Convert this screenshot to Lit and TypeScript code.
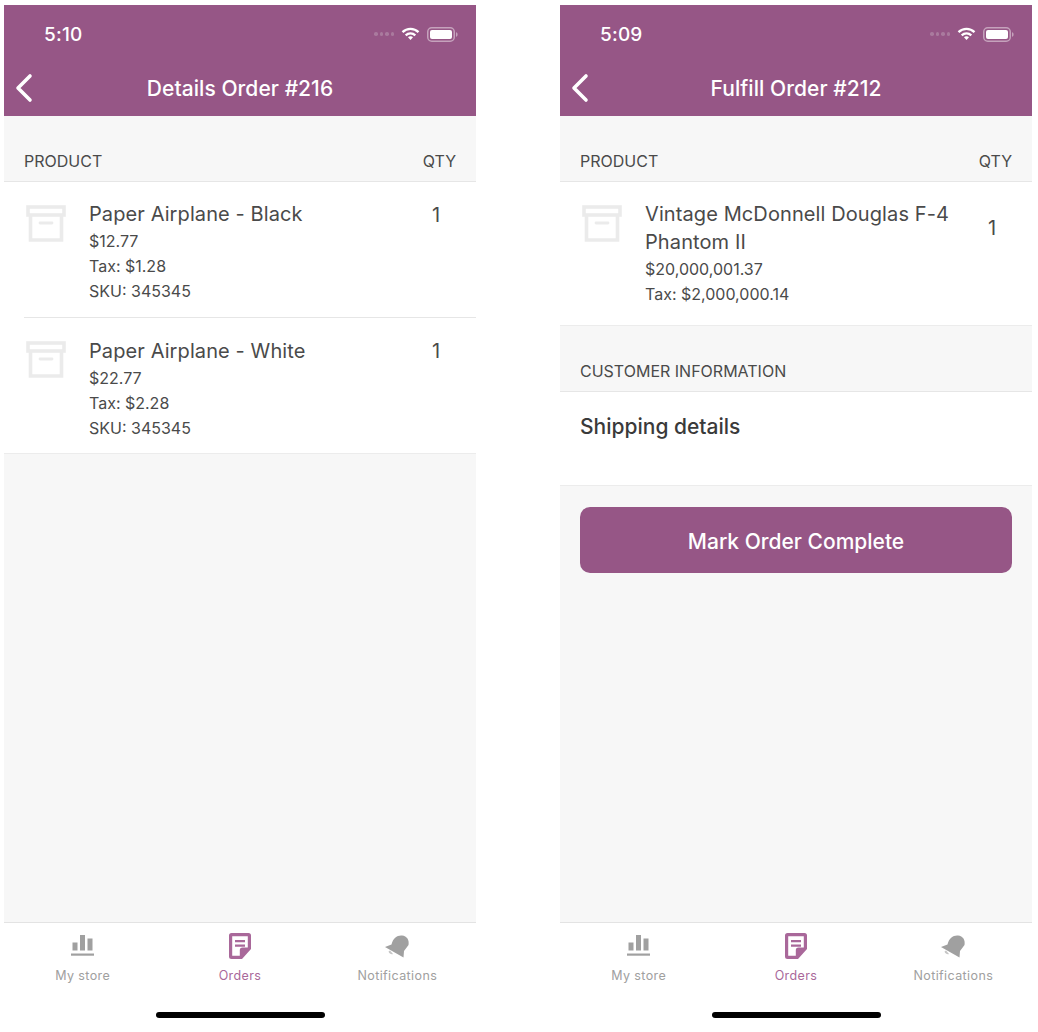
import { LitElement, html, css, svg } from "lit";
import { customElement, property } from "lit/decorators.js";

const archive = html`<svg class="box" width="40" height="40" viewBox="0 0 40 40" fill="none" stroke="#ebebeb" stroke-width="3.6"><rect x="2" y="3" width="36" height="8"/><path d="M4.5 11v25h31V11"/><path d="M14 19h12" stroke-width="2.8" stroke-linecap="round"/></svg>`;

const chart = svg`<path fill="currentColor" d="M1.5 10h5v8h-5zM9 2.5h5V18H9zM16.5 6h5v12h-5z"/><path fill="currentColor" d="M0 21h23v2.2H0z"/>`;

@customElement("order-phone")
class OrderPhone extends LitElement {
  @property() time = "";
  @property() heading = "";
  static styles = css`
    :host { display: block; width: 472px; height: 1022px; background: #f7f7f7; }
    .phone { display: flex; flex-direction: column; height: 100%; }
    .top { background: #965686; color: #fff; height: 111px; flex: none; display: flex; flex-direction: column; }
    .status { height: 53px; display: flex; align-items: center; justify-content: space-between; padding: 5px 18px 0 40px; box-sizing: border-box; }
    .time { font-size: 19px; font-weight: 500; letter-spacing: .2px; width: 40px; }
    .sys { display: flex; align-items: center; gap: 7px; }
    .dots { display: flex; gap: 2px; }
    .dots i { width: 3.5px; height: 3.5px; border-radius: 50%; background: #aa7a9e; }
    .nav { flex: 1; position: relative; display: flex; align-items: center; justify-content: center; padding-top: 3px; }
    .title { font-size: 21px; font-weight: 500; letter-spacing: .06px; }
    .back { position: absolute; left: 10px; top: 15px; }
    .content { flex: 1; display: flex; flex-direction: column; min-height: 0; }
    .tabs { flex: none; height: 105px; background: #fff; border-top: 1px solid #e3e3e3; box-sizing: border-box; display: grid; grid-template-columns: repeat(3, 1fr); position: relative; }
    .tab { display: flex; flex-direction: column; align-items: center; padding-top: 9px; color: #a0a0a0; font-size: 12.5px; line-height: 15px; font-weight: 400; gap: 8px; letter-spacing: .4px; }
    .tab.on { color: #a9689a; }
    .tab svg { display: block; height: 28px; }
    .home { position: absolute; left: 152px; bottom: 9px; width: 169px; height: 6px; border-radius: 3px; background: #000; }
  `;
  render() {
    return html`<div class="phone">
      <div class="top">
        <div class="status">
          <span class="time">${this.time}</span>
          <span class="sys">
            <span class="dots"><i></i><i></i><i></i><i></i></span>
            <svg width="19" height="14" viewBox="0 0 19 14" fill="none" stroke="#fff" stroke-width="2.3"><path d="M1.5 5.2a11.5 11.5 0 0 1 16 0"/><path d="M4.7 8.300a7 7 0 0 1 9.600 0"/><path fill="#fff" stroke="none" d="M9.500 9.200a3 3 0 0 1 2.500 1.100L9.500 13 7 10.300a3 3 0 0 1 2.500-1.100z"/></svg>
            <svg width="31" height="15" viewBox="0 0 31 15"><rect x=".75" y=".75" width="26.500" height="13.500" rx="4" fill="none" stroke="#c5a2bc" stroke-width="1.500"/><rect x="3" y="3" width="22" height="9" rx="2" fill="#fff"/><path d="M29 5.300c1 .3 1.600 1.100 1.600 2.200s-.6 1.900-1.600 2.200z" fill="#c5a2bc"/></svg>
          </span>
        </div>
        <div class="nav">
          <svg class="back" width="20" height="30" viewBox="0 0 20 30" fill="none" stroke="#fff" stroke-width="3.600" stroke-linecap="round" stroke-linejoin="round"><path d="M16 3 4 15l12 12"/></svg>
          <span class="title">${this.heading}</span>
        </div>
      </div>
      <div class="content"><slot></slot></div>
      <div class="tabs">
        <div class="tab"><svg width="23" height="28" viewBox="0 -.5 23 28">${chart}</svg>My store</div>
        <div class="tab on"><svg width="24" height="28" viewBox="0 0 24 28"><path d="M3.500 1h17A2.500 2.500 0 0 1 23 3.500V17l-9 10H3.500A2.500 2.500 0 0 1 1 24.500V3.500A2.500 2.500 0 0 1 3.500 1z" fill="#a9689a"/><path d="M4.200 4.200h15.600v11.300h-5.300a2.700 2.700 0 0 0-2.700 2.700v5.600H4.200z" fill="#fff"/><path d="M7 8h10v2.200H7zM7 12.500h10v2.200H7z" fill="#a9689a"/></svg>Orders</div>
        <div class="tab"><svg width="26" height="28" viewBox="0 -3 26 28"><path fill="currentColor" d="M1 12 7.500 9.500C9 3 13.500 0 18 .5 23 1 25.500 5 24.500 10L20 16l-.5 6.500z"/><path fill="currentColor" d="M4.500 16.500a3.500 3.500 0 0 0 4.500 2.500L6 15.500z" opacity=".6"/></svg>Notifications</div>
        <div class="home"></div>
      </div>
    </div>`;
  }
}

@customElement("app-root")
export class AppRoot extends LitElement {
  static styles = css`
    :host { display: block; width: 1038px; height: 1032px; background: #fff; font-family: Inter, "Liberation Sans", sans-serif; }
    .wrap { display: flex; gap: 84px; padding: 5px 0 0 4px; }
    .sec { display: flex; justify-content: space-between; align-items: flex-end; padding: 0 20px 11px 20px; font-size: 16px; color: #4a4a4a; height: 65px; box-sizing: border-box; line-height: 18px; }
    .list { background: #fff; border-top: 1px solid #e6e6e6; border-bottom: 1px solid #ececec; }
    .row { display: flex; padding: 18px 20px 0 22px; height: 135px; box-sizing: border-box; }
    .row.ruled { height: 136px; }
    .row.plain { padding-top: 19px; }
    .box { flex: none; margin-right: 23px; margin-top: 4px; }
    .row.plain .box { margin-top: 3px; }
    .info { flex: 1; }
    .name { font-size: 20px; letter-spacing: .1px; line-height: 28px; color: #4a4a4a; margin-bottom: 1px; }
    .line { font-size: 16px; line-height: 25px; color: #4a4a4a; }
    .qty { font-size: 20px; color: #4a4a4a; width: 24px; margin: 1px 8px 0 0; text-align: center; line-height: 28px; }
    .row.plain .qty { margin-top: 0; }
    .ruled { position: relative; }
    .ruled::after { content: ""; position: absolute; left: 20px; right: 0; bottom: 0; height: 1px; background: #e6e6e6; }
    .row.big { height: 143px; }
    .row.big .qty { margin-top: 14px; }
    .ship { height: 93px; padding: 21px 20px 0; box-sizing: border-box; font-size: 21px; font-weight: 500; color: #3a3a3a; line-height: 28px; }
    .btn { margin: 21px 20px 0; height: 66px; padding-top: 2px; box-sizing: border-box; background: #965686; color: #fff; border-radius: 10px; font-size: 21px; font-weight: 500; display: flex; align-items: center; justify-content: center; }
  `;
  row(name: string, price: string, tax: string, sku: string, ruled: boolean) {
    return html`<div class="row ${ruled ? "ruled" : "plain"}">${archive}
      <div class="info"><div class="name">${name}</div><div class="line">${price}</div><div class="line">${tax}</div><div class="line">${sku}</div></div>
      <div class="qty">1</div></div>`;
  }
  render() {
    return html`<div class="wrap">
      <order-phone time="5:10" heading="Details Order #216">
        <div class="sec"><span>PRODUCT</span><span>QTY</span></div>
        <div class="list">
          ${this.row("Paper Airplane - Black", "$12.77", "Tax: $1.28", "SKU: 345345", true)}
          ${this.row("Paper Airplane - White", "$22.77", "Tax: $2.28", "SKU: 345345", false)}
        </div>
      </order-phone>
      <order-phone time="5:09" heading="Fulfill Order #212">
        <div class="sec"><span>PRODUCT</span><span>QTY</span></div>
        <div class="list">
          <div class="row big">${archive}
            <div class="info"><div class="name">Vintage McDonnell Douglas F-4 Phantom II</div><div class="line">$20,000,001.37</div><div class="line">Tax: $2,000,000.14</div></div>
            <div class="qty">1</div></div>
        </div>
        <div class="sec"><span>CUSTOMER INFORMATION</span></div>
        <div class="list"><div class="ship">Shipping details</div></div>
        <div class="btn">Mark Order Complete</div>
      </order-phone>
    </div>`;
  }
}
